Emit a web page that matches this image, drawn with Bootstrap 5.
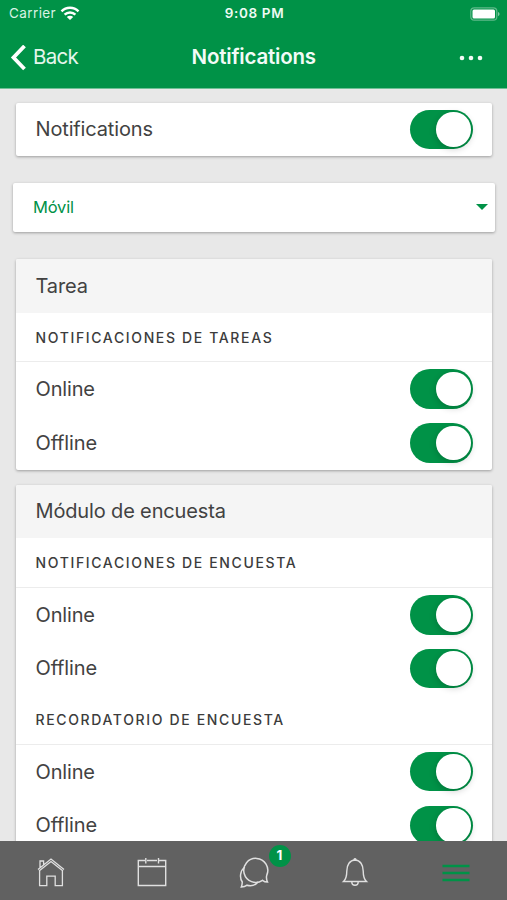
<!DOCTYPE html>
<html lang="es">
<head>
<meta charset="utf-8">
<meta name="viewport" content="width=device-width, initial-scale=1">
<title>Notifications</title>
<link href="https://cdn.jsdelivr.net/npm/bootstrap@5.3.0/dist/css/bootstrap.min.css" rel="stylesheet">
<style>
:root{--brand:#009247}
html,body{height:100%}
body{font-family:Inter,Roboto,"Liberation Sans",sans-serif;background:#e8e8e8;color:#424242;overflow:hidden}
.screen{height:900px}
.top{background:var(--brand);height:89px;border-bottom:1px solid #6fc096}
.status{height:27px;font-size:13.5px;padding:0 7px 0 9px}
.carrier{letter-spacing:.4px;color:#d9f2e4}
.clock{font-weight:600;font-size:13.5px;letter-spacing:.65px;color:#eefaf3}
.titlebar{height:61px;padding:0 24px 0 10px}
.back{font-size:20.5px;letter-spacing:-.7px;margin-left:6px;color:#e4f6ec}
.titlebar .heading{font-size:20.5px;font-weight:600;letter-spacing:-.2px;padding-left:14.5px;color:#f3fbf7}
.content{padding:13.5px 15px 0 15.5px}
.panel{border:0;border-radius:2px;box-shadow:0 1px 3px rgba(0,0,0,.32);overflow:hidden}
.picker{height:49px;padding:0 7px 0 20px;background:#fff;color:var(--brand);font-size:16.5px;letter-spacing:-.2px}
.line{height:53.6px;padding:0 19px 0 20px;font-size:20px;letter-spacing:-.15px}
.panel-title{background:#f5f5f5}
.section-label{height:49.8px;padding:.5px 20px 0;border-bottom:1px solid #ececec;font-size:14px;font-weight:500;letter-spacing:1.64px;color:#3c3c3c}
.form-switch .toggle.form-check-input{position:relative;float:none;margin:0;width:63px;height:39.5px;border:0;border-radius:20px;background:var(--brand)}
.toggle::before{content:"";position:absolute;right:2.5px;top:2.5px;width:34.5px;height:34.5px;border-radius:50%;background:#fff;box-shadow:0 2px 7px rgba(0,0,0,.2)}
.panel + .panel{margin-top:15px}
.panel + .panel.picker{margin:26.8px -3px 27.1px -2.5px}
.panel.picker + .panel{margin-top:0}
.tabs{height:59px;background:#616161;padding:2px 0 0}
.tab-badge{position:absolute;left:50%;top:-11px;margin-left:15px;width:22px;height:22px;background:var(--brand);font-size:13.5px;font-weight:700}
.menu-icon{margin-bottom:1px}
</style>
<script src="https://cdn.jsdelivr.net/npm/bootstrap@5.3.0/dist/js/bootstrap.bundle.min.js"></script>
</head>
<body>
<div class="screen d-flex flex-column overflow-hidden">
  <header class="top text-white flex-shrink-0">
    <div class="status row g-0 align-items-center">
      <div class="col d-flex align-items-center gap-1"><span class="carrier">Carrier</span>
        <svg width="20" height="15" viewBox="0 0 20 15" fill="none" stroke="#fff" stroke-width="2.5"><path d="M1.5 5.3a12 12 0 0 1 17 0M4.6 8.7a7.8 7.8 0 0 1 10.8 0"/><path d="M10 14 6.8 11a4.5 4.5 0 0 1 6.4 0z" fill="#fff" stroke="none"/></svg></div>
      <div class="col-auto clock">9:08 PM</div>
      <div class="col d-flex justify-content-end"><svg width="30" height="14" viewBox="0 0 30 14"><rect x=".8" y=".8" width="26" height="12.4" rx="3.5" fill="none" stroke="#5fb98a" stroke-width="1.2"/><rect x="2.5" y="2.5" width="22.5" height="9" rx="1.5" fill="#fff"/><path d="M28 5v4.2q1.6-.6 1.6-2.1T28 5z" fill="#7fc8a2"/></svg></div>
    </div>
    <nav class="titlebar row g-0 align-items-center">
      <div class="col d-flex align-items-center"><svg width="17" height="26" viewBox="0 0 17 26" fill="none" stroke="#fff" stroke-width="3.8"><path d="M14.500 1 3.500 12.500l11 11.500"/></svg><span class="back">Back</span></div>
      <div class="col-auto heading">Notifications</div>
      <div class="col d-flex justify-content-end"><svg width="24" height="6" viewBox="0 0 24 6" fill="#f3fbf7"><circle cx="3" cy="3" r="2.3"/><circle cx="12" cy="3" r="2.3"/><circle cx="21" cy="3" r="2.3"/></svg></div>
    </nav>
  </header>
  <main class="content flex-grow-1 overflow-hidden">
    <div class="card panel"><label class="line d-flex align-items-center justify-content-between form-switch"><span>Notifications</span><input class="form-check-input toggle" type="checkbox" checked></label></div>
    <div class="picker panel d-flex align-items-center justify-content-between"><span>Móvil</span><svg width="12" height="6" viewBox="0 0 12 6" fill="#009247"><path d="M0 0h12L6 6z"/></svg></div>
    <div class="card panel">
      <div class="line panel-title d-flex align-items-center">Tarea</div>
      <div class="section-label d-flex align-items-center">NOTIFICACIONES DE TAREAS</div>
      <label class="line d-flex align-items-center justify-content-between form-switch"><span>Online</span><input class="form-check-input toggle" type="checkbox" checked></label>
      <label class="line d-flex align-items-center justify-content-between form-switch"><span>Offline</span><input class="form-check-input toggle" type="checkbox" checked></label>
    </div>
    <div class="card panel">
      <div class="line panel-title d-flex align-items-center">Módulo de encuesta</div>
      <div class="section-label d-flex align-items-center">NOTIFICACIONES DE ENCUESTA</div>
      <label class="line d-flex align-items-center justify-content-between form-switch"><span>Online</span><input class="form-check-input toggle" type="checkbox" checked></label>
      <label class="line d-flex align-items-center justify-content-between form-switch"><span>Offline</span><input class="form-check-input toggle" type="checkbox" checked></label>
      <div class="section-label d-flex align-items-center">RECORDATORIO DE ENCUESTA</div>
      <label class="line d-flex align-items-center justify-content-between form-switch"><span>Online</span><input class="form-check-input toggle" type="checkbox" checked></label>
      <label class="line d-flex align-items-center justify-content-between form-switch"><span>Offline</span><input class="form-check-input toggle" type="checkbox" checked></label>
    </div>
  </main>
  <footer class="tabs row g-0 align-items-center flex-shrink-0 text-center">
    <div class="col"><svg width="30" height="30" viewBox="0 0 30 30" fill="none" stroke="#e0e0e0" stroke-width="1.3"><path d="M2 12.600 15 2l13 10.600M3 14 15 4.600 27 14M4 10.800V4h3.600v4M3.600 13.600v15h7.200v-9.400h8.400v9.400h7.200v-15"/></svg></div>
    <div class="col"><svg width="30" height="30" viewBox="0 0 30 30" fill="none" stroke="#e0e0e0" stroke-width="1.4"><path d="M8 3.500H1.300v25h27.400v-25H22M10 3.500h10M1.300 9.500h27.400M8.800 1v5.500M21.500 1v5.500"/></svg></div>
    <div class="col position-relative"><svg width="32" height="32" viewBox="0 0 32 32" fill="none" stroke="#e0e0e0" stroke-width="1.5"><path d="M29.500 26c-2 0-3.500-.5-5-1.700a12 12 0 1 1 4.300-5.200c-.6 2-.2 4.900.7 6.900z"/><path d="M6.800 11c-5 4-5.300 11-2.500 15-.1 2-.4 3.500-1 5 2 0 4.200-.6 5.800-1.800 4 1.200 8 .2 11-3.200"/></svg>
      <span class="tab-badge badge rounded-circle p-0 d-flex align-items-center justify-content-center">1</span></div>
    <div class="col"><svg width="28" height="30" viewBox="0 0 28 30" fill="none" stroke="#e0e0e0" stroke-width="1.4"><path d="M2.500 24.500h23c-2.800-2.500-3.300-5-3.300-10.500 0-6-3-11-8.200-11s-8.200 5-8.200 11c0 5.500-.5 8-3.300 10.500zM10.800 25c0 4.300 6.400 4.300 6.400 0"/><circle cx="14" cy="2.500" r=".9" fill="#e0e0e0"/></svg></div>
    <div class="col"><svg class="menu-icon" width="28" height="20" viewBox="0 0 28 20" fill="none" stroke="#009247" stroke-width="2.4"><path d="M.5 3h27M.5 10h27M.5 17h27"/></svg></div>
  </footer>
</div>
</body>
</html>
